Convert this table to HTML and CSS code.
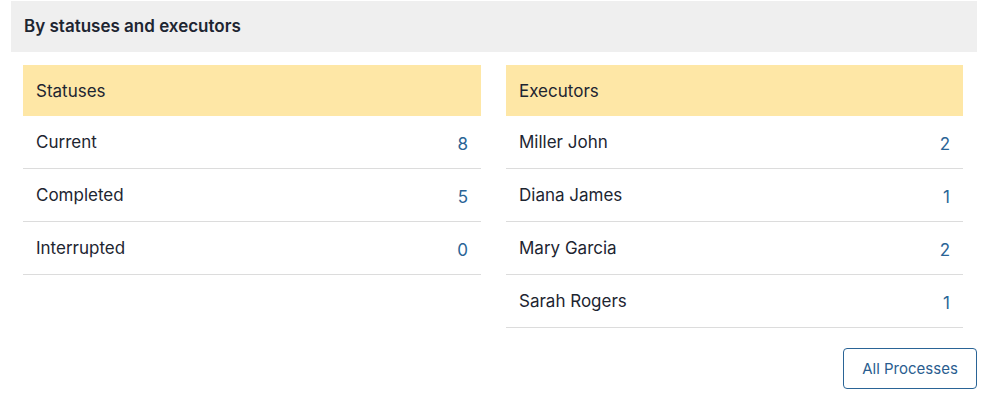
FILE: index.html
```html
<!DOCTYPE html>
<html>
<head>
<meta charset="utf-8">
<link rel="stylesheet" href="styles.css">
</head>
<body>
<div class="panel">
  <div class="panel-head">By statuses and executors</div>
  <div class="tables">
    <div class="tbl">
      <div class="tbl-head">Statuses</div>
      <div class="row"><span>Current</span><span class="num">8</span></div>
      <div class="row"><span>Completed</span><span class="num">5</span></div>
      <div class="row"><span>Interrupted</span><span class="num">0</span></div>
    </div>
    <div class="tbl">
      <div class="tbl-head">Executors</div>
      <div class="row"><span>Miller John</span><span class="num">2</span></div>
      <div class="row"><span>Diana James</span><span class="num">1</span></div>
      <div class="row"><span>Mary Garcia</span><span class="num">2</span></div>
      <div class="row"><span>Sarah Rogers</span><span class="num">1</span></div>
    </div>
  </div>
  <div class="actions">
    <button class="btn">All Processes</button>
  </div>
</div>
</body>
</html>
```

FILE: styles.css
```css
html, body {
  margin: 0;
  padding: 0;
  background: #ffffff;
}
body {
  font-family: Inter, "Noto Sans", sans-serif;
  color: #1d2531;
}
.panel {
  width: 966px;
  margin: 1px 0 0 11px;
}
.panel-head {
  background: #efefef;
  height: 51px;
  box-sizing: border-box;
  padding: 0 13px 1px;
  display: flex;
  align-items: center;
  font-size: 17px;
  font-weight: 600;
}
.tables {
  display: grid;
  grid-template-columns: 458px 457px;
  column-gap: 25px;
  padding: 13px 12px 0 12px;
  align-items: start;
}
.tbl-head {
  background: #fee7a6;
  height: 51px;
  box-sizing: border-box;
  padding: 0 13px;
  display: flex;
  align-items: center;
  font-size: 17px;
}
.row {
  height: 53px;
  box-sizing: border-box;
  border-bottom: 1px solid #dcdcdc;
  display: flex;
  align-items: center;
  justify-content: space-between;
  padding: 0 13px;
  font-size: 17px;
}
.num {
  color: #2a6496;
  padding-top: 4px;
}
.actions {
  display: flex;
  justify-content: flex-end;
  padding-top: 20px;
}
.btn {
  font-family: Inter, "Noto Sans", sans-serif;
  font-size: 15px;
  color: #2a5d8f;
  background: #ffffff;
  border: 1px solid #2a6496;
  border-radius: 4px;
  width: 134px;
  height: 41px;
  padding: 0;
}
```
